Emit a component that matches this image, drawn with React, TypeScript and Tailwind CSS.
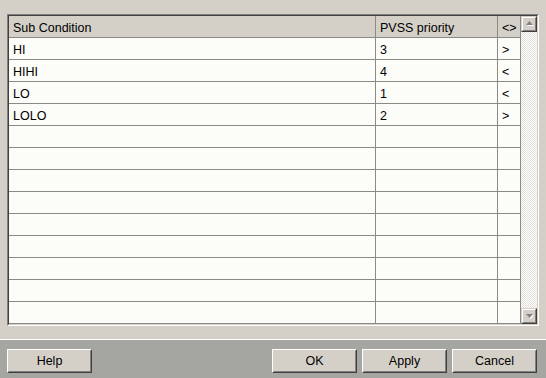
const rows: [string, string, string][] = [
  ["HI", "3", ">"],
  ["HIHI", "4", "<"],
  ["LO", "1", "<"],
  ["LOLO", "2", ">"],
  ["", "", ""],
  ["", "", ""],
  ["", "", ""],
  ["", "", ""],
  ["", "", ""],
  ["", "", ""],
  ["", "", ""],
  ["", "", ""],
  ["", "", ""],
];

const ScrollButton = ({ down }: { down?: boolean }) => (
  <div className="h-[16px] w-[16px] border border-t-[#d4d0c8] border-l-[#d4d0c8] border-b-[#404040] border-r-[#404040] bg-[#d4d0c8]">
    <div className="flex h-full w-full items-center justify-center border border-t-white border-l-white border-b-[#808080] border-r-[#808080]">
      <svg width="9" height="6" viewBox="0 0 9 6">
        {down ? (
          <>
            <path d="M2 2h7l-3.5 4z" fill="#fff" />
            <path d="M1 1h7l-3.5 4z" fill="#808080" />
          </>
        ) : (
          <>
            <path d="M2 5h7l-3.5-4z" fill="#fff" />
            <path d="M1 4h7l-3.5-4z" fill="#808080" />
          </>
        )}
      </svg>
    </div>
  </div>
);

const DialogButton = ({ label }: { label: string }) => (
  <button className="h-[24px] w-[85px] border border-t-white border-l-white border-b-[#404040] border-r-[#404040] bg-[#d4d0c8]">
    <div className="flex h-full w-full items-center justify-center border border-transparent border-b-[#808080] border-r-[#808080] pt-[1px] text-[12.5px] text-black">
      {label}
    </div>
  </button>
);

const cell = "flex items-center border-b border-r border-[#8a8a86] pl-1 pt-[3px] text-[12.5px] text-black";

const App = () => {
  return (
    <div className="flex h-[378px] w-[546px] flex-col bg-[#d4d0c8] font-['Liberation_Sans',Arial,sans-serif]">
      <div className="h-[339px] px-[7px] pt-[14px]">
        <div className="border border-t-[#808080] border-l-[#808080] border-b-white border-r-white">
          <div className="flex border border-t-[#404040] border-l-[#404040] border-b-[#d4d0c8] border-r-[#d4d0c8]">
            <div className="grid flex-1 grid-cols-[367px_122px_1fr] bg-[#fcfcf8]">
              <div className={`${cell} h-[22px] bg-[#d4d0c8]`}>Sub Condition</div>
              <div className={`${cell} h-[22px] bg-[#d4d0c8]`}>PVSS priority</div>
              <div className={`${cell} h-[22px] bg-[#d4d0c8]`}>&lt;&gt;</div>
              {rows.map((r, i) => (
                <div key={i} className="contents">
                  <div className={`${cell} h-[22px]`}>{r[0]}</div>
                  <div className={`${cell} h-[22px]`}>{r[1]}</div>
                  <div className={`${cell} h-[22px]`}>{r[2]}</div>
                </div>
              ))}
            </div>
            <div className="flex w-[16px] flex-col bg-[repeating-conic-gradient(#e4e1da_0_25%,#ffffff_0_50%)] bg-size-[2px_2px]">
              <ScrollButton />
              <div className="flex-1" />
              <ScrollButton down />
            </div>
          </div>
        </div>
      </div>
      <div className="flex flex-1 items-start border-t border-white bg-[#a5a6a2] pl-[7px] pr-[9px] pt-[9px]">
        <DialogButton label="Help" />
        <div className="flex-1" />
        <div className="flex gap-[5px]">
          <DialogButton label="OK" />
          <DialogButton label="Apply" />
          <DialogButton label="Cancel" />
        </div>
      </div>
    </div>
  );
};

export default App;
